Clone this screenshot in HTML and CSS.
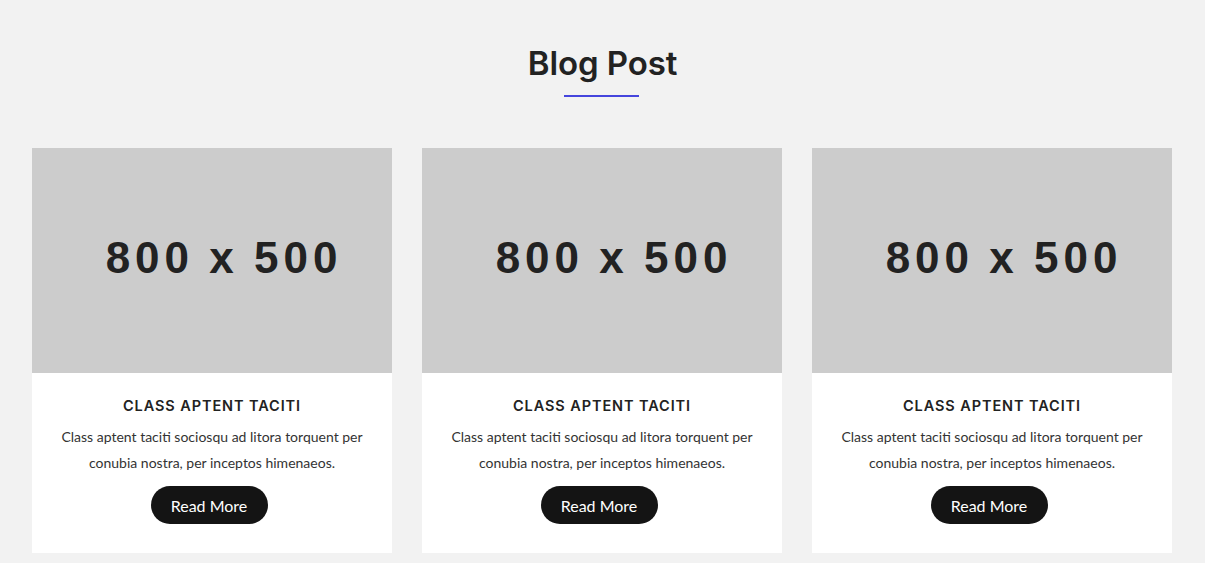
FILE: index.html
```html
<!DOCTYPE html>
<html lang="en">
<head>
<meta charset="utf-8">
<title>Blog Post</title>
<link rel="stylesheet" href="styles.css">
</head>
<body>
<section class="blog">
  <div class="blog-head">
    <h2 class="blog-title">Blog Post</h2>
    <span class="blog-rule"></span>
  </div>
  <div class="blog-grid">
    <article class="card">
      <div class="card-img"><span class="card-img-text">800 x 500</span></div>
      <div class="card-body">
        <h3 class="card-title">CLASS APTENT TACITI</h3>
        <p class="card-text">Class aptent taciti sociosqu ad litora torquent per conubia nostra, per inceptos himenaeos.</p>
        <a class="card-btn" href="#">Read More</a>
      </div>
    </article>
    <article class="card">
      <div class="card-img"><span class="card-img-text">800 x 500</span></div>
      <div class="card-body">
        <h3 class="card-title">CLASS APTENT TACITI</h3>
        <p class="card-text">Class aptent taciti sociosqu ad litora torquent per conubia nostra, per inceptos himenaeos.</p>
        <a class="card-btn" href="#">Read More</a>
      </div>
    </article>
    <article class="card">
      <div class="card-img"><span class="card-img-text">800 x 500</span></div>
      <div class="card-body">
        <h3 class="card-title">CLASS APTENT TACITI</h3>
        <p class="card-text">Class aptent taciti sociosqu ad litora torquent per conubia nostra, per inceptos himenaeos.</p>
        <a class="card-btn" href="#">Read More</a>
      </div>
    </article>
  </div>
</section>
</body>
</html>
```

FILE: styles.css
```css
* { box-sizing: border-box; }
html, body { margin: 0; padding: 0; }
body {
  background: #f2f2f2;
  font-family: Lato, "Liberation Sans", sans-serif;
  color: #222;
  overflow: hidden;
}
.blog { padding-top: 40px; }
.blog-head {
  display: flex;
  flex-direction: column;
  align-items: center;
}
.blog-title {
  margin: 0;
  font-family: Inter, "Noto Sans", sans-serif;
  font-weight: 600;
  font-size: 33px;
  line-height: 46px;
  color: #222;
  letter-spacing: -0.1px;
}
.blog-rule {
  display: block;
  width: 75px;
  height: 2px;
  background: #4545dd;
  margin-top: 9px;
  margin-right: 2px;
}
.blog-grid {
  display: grid;
  grid-template-columns: repeat(3, 360px);
  gap: 30px;
  padding: 0 33px 0 32px;
  margin-top: 51px;
}
.card { background: #fff; }
.card-img {
  height: 225px;
  background: #cccccc;
  display: flex;
  align-items: center;
  justify-content: center;
  padding-left: 24px;
  padding-bottom: 5px;
}
.card-img-text {
  font-family: "Liberation Sans", Arial, sans-serif;
  font-weight: 700;
  font-size: 44px;
  letter-spacing: 5px;
  color: #222;
  word-spacing: -2px;
}
.card-body {
  padding: 24px 20px 29px;
  display: flex;
  flex-direction: column;
  align-items: center;
  text-align: center;
}
.card-title {
  margin: 0;
  font-family: Inter, "Noto Sans", sans-serif;
  font-weight: 600;
  font-size: 14.5px;
  letter-spacing: 0.9px;
  line-height: 18px;
  color: #222;
}
.card-text {
  margin: 9px 0 0;
  font-family: Lato, sans-serif;
  font-size: 14px;
  line-height: 26px;
  color: #333;
}
.card-btn {
  margin: 10px 6px 0 0;
  display: inline-flex;
  align-items: center;
  justify-content: center;
  width: 117px;
  height: 38px;
  border-radius: 19px;
  background: #141414;
  color: #fff;
  text-decoration: none;
  font-family: Lato, sans-serif;
  font-size: 16px;
}
```
